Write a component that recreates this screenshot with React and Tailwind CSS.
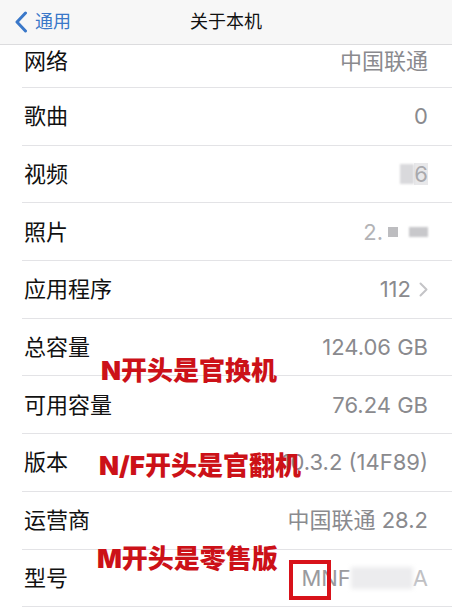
import React from "react";

const font = { fontFamily: 'Inter, "Noto Sans CJK SC", sans-serif' };

function Row({ label, children, first }) {
  return (
    <div
      className={
        "flex items-center justify-between pl-[2px] pr-[24px] border-b border-[#e3e3e6] " +
        (first ? "h-[43px] pb-[11px]" : "h-[57.7px]")
      }
    >
      <span className="text-[22px] text-[#111] leading-none">{label}</span>
      <span className="text-[22px] text-[#8a8a8e] leading-none flex items-center">{children}</span>
    </div>
  );
}

export default function App() {
  return (
    <div className="relative w-[452px] h-[613px] bg-white overflow-hidden" style={font}>
      <div className="h-[45px] bg-[#f7f7f7] border-b border-[#dcdcde] flex items-center relative">
        <div className="flex items-center pl-[14px] text-[#3a78c9]">
          <svg width="14" height="22" viewBox="0 0 14 22">
            <path d="M11.5 2 L3 11 L11.5 20" fill="none" stroke="#3a78c9" strokeWidth="3" strokeLinecap="round" strokeLinejoin="round" />
          </svg>
          <span className="ml-[7px] text-[18px] leading-none">通用</span>
        </div>
        <div className="absolute left-0 right-0 text-center text-[18px] text-[#111] leading-none pointer-events-none">关于本机</div>
      </div>
      <div className="pl-[22px]">
        <Row label="网络" first>中国联通</Row>
        <Row label="歌曲">0</Row>
        <Row label="视频">
          <span className="inline-block w-[14px] h-[20px] bg-[#d9d9dc] blur-[1px]" />
          <span className="bg-[#e8e8ea] text-[#a9a9ad]">6</span>
        </Row>
        <Row label="照片">
          <span className="text-[#b3b3b6]">2.</span>
          <span className="inline-block w-[10px] h-[10px] bg-[#bdbdc0] mx-[5px]" />
          <span className="inline-block w-[19px] h-[10px] bg-[#c8c8cb] ml-[6px] blur-[1px]" />
        </Row>
        <Row label="应用程序">
          112
          <svg className="ml-[8px]" width="9" height="15" viewBox="0 0 9 15">
            <path d="M1.5 1.5 L7.5 7.5 L1.5 13.5" fill="none" stroke="#c4c4c7" strokeWidth="2" strokeLinecap="round" strokeLinejoin="round" />
          </svg>
        </Row>
        <Row label="总容量">124.06 GB</Row>
        <Row label="可用容量">76.24 GB</Row>
        <Row label="版本">10.3.2 (14F89)</Row>
        <Row label="运营商">中国联通 28.2</Row>
        <Row label="型号">
          <span className="text-[#9a9a9e]">MNF</span>
          <span className="inline-block w-[62px] h-[22px] bg-[#ececee] blur-[2px]" />
          <span className="text-[#c0c0c3]">A</span>
        </Row>
        <div className="h-[20px]" />
      </div>

      <div className="absolute left-[101px] top-[358px] text-[26px] font-black text-[#cc1118] leading-none whitespace-nowrap">N开头是官换机</div>
      <div className="absolute left-[99px] top-[453px] text-[26px] font-black text-[#cc1118] leading-none whitespace-nowrap">N/F开头是官翻机</div>
      <div className="absolute left-[97px] top-[546px] text-[26px] font-black text-[#cc1118] leading-none whitespace-nowrap">M开头是零售版</div>
      <div className="absolute left-[289px] top-[560px] w-[42px] h-[40px] border-[4px] border-[#d8121a]" />
    </div>
  );
}
